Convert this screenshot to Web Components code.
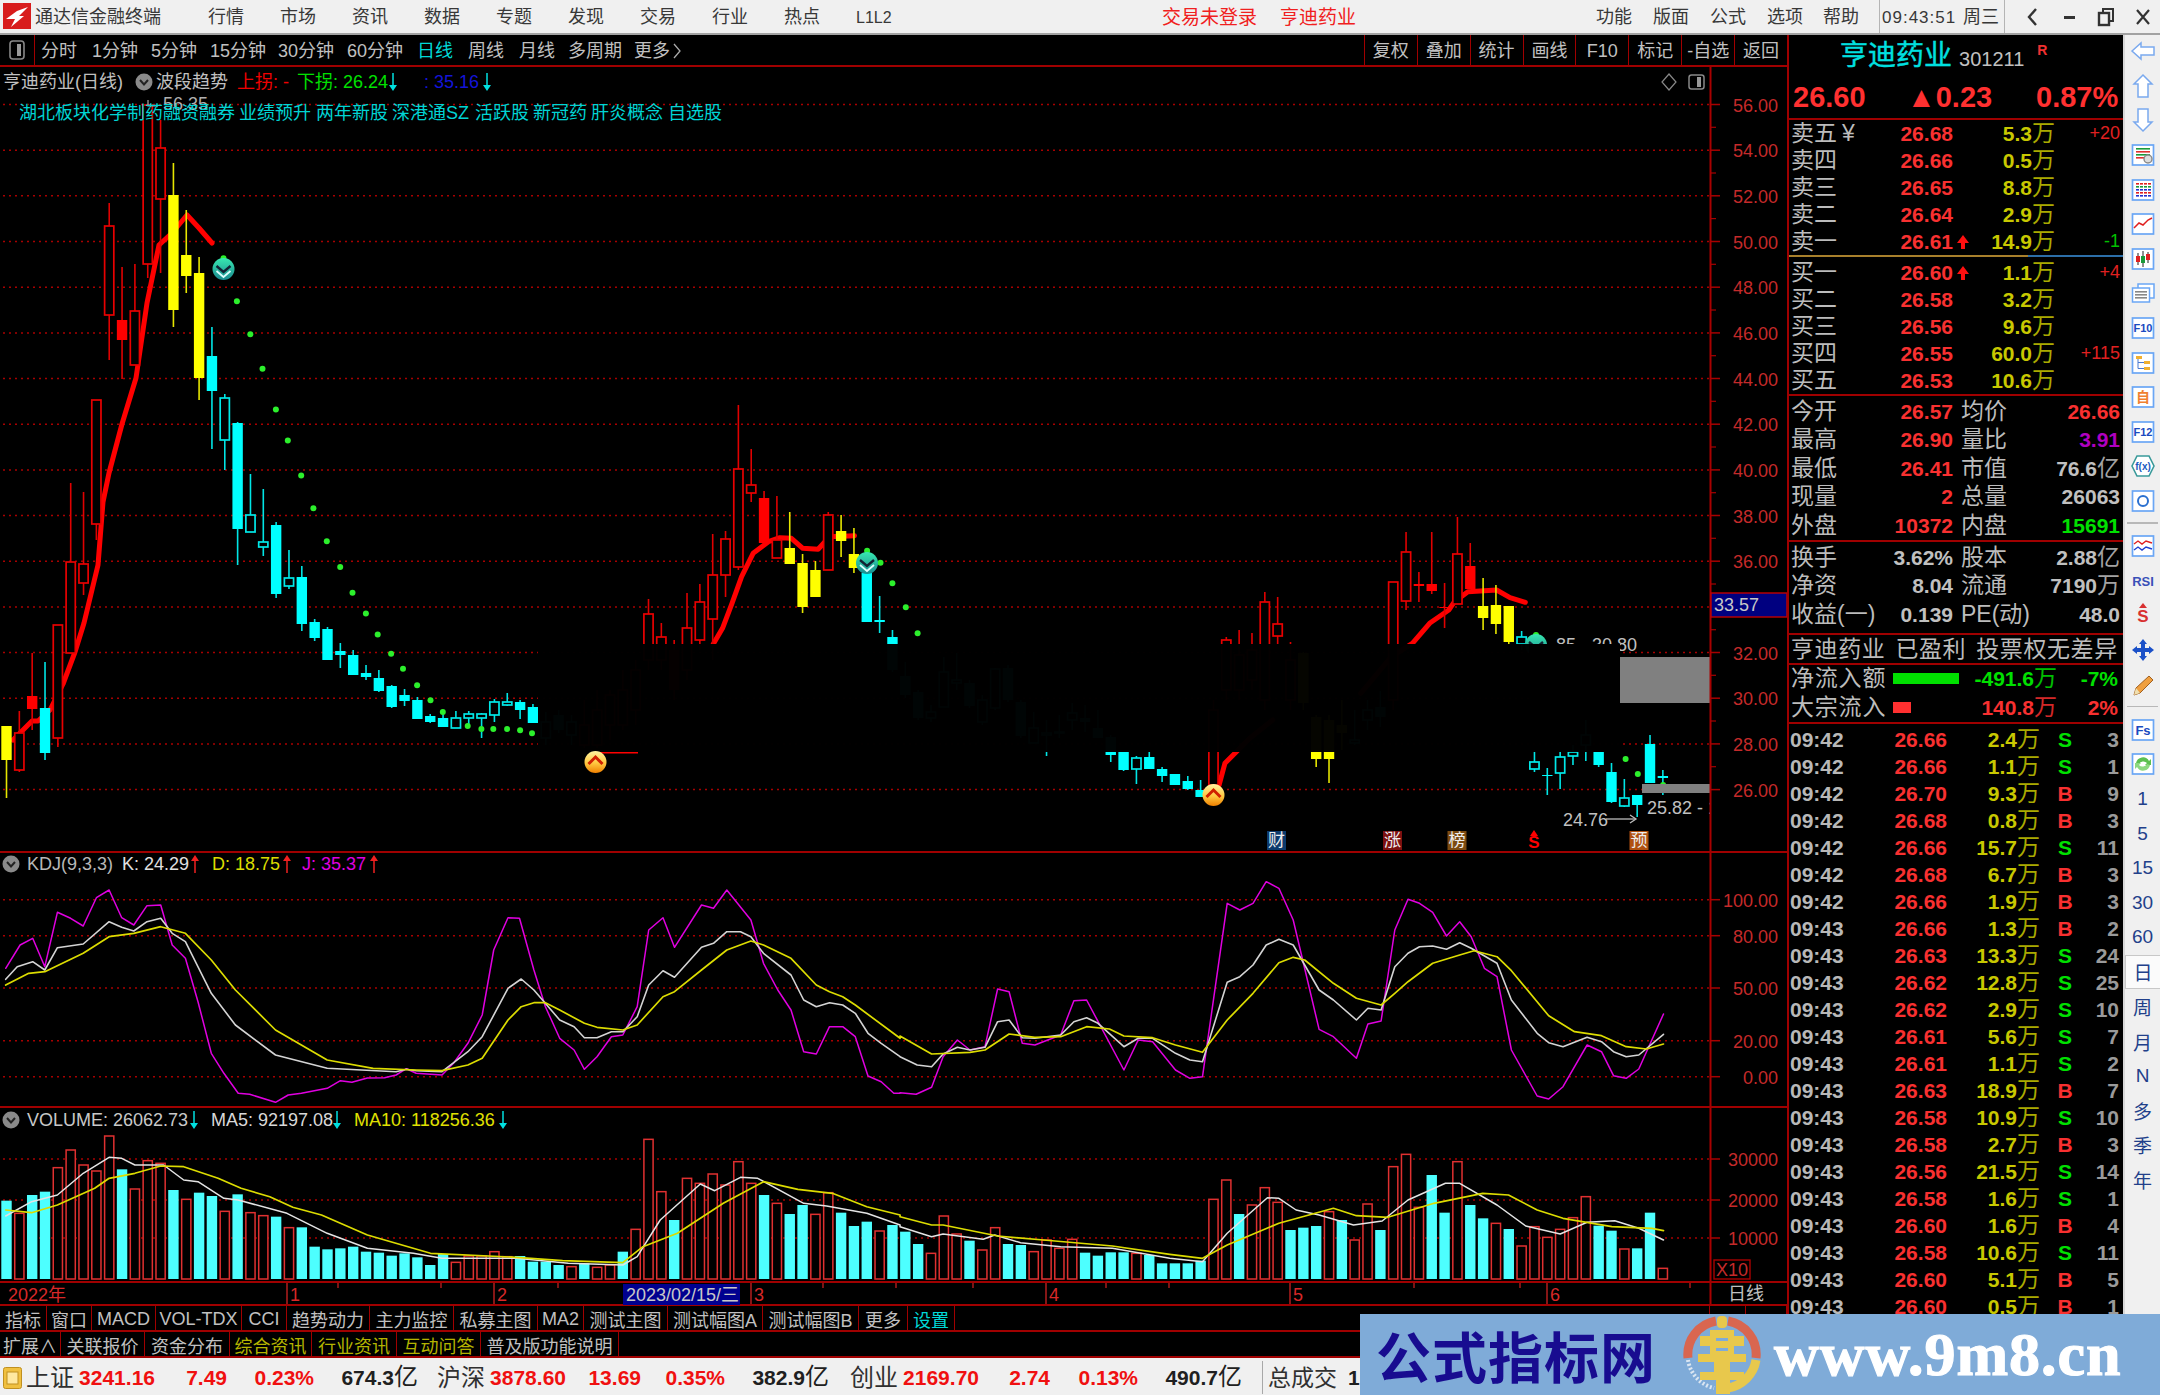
<!doctype html>
<html lang="zh"><head><meta charset="utf-8"><title>通达信金融终端</title>
<style>html,body{margin:0;padding:0;background:#000;overflow:hidden}</style></head>
<body>
<tdx-app>
  <tdx-titlebar></tdx-titlebar>
  <tdx-body>
    <tdx-left>
      <tdx-toolbar></tdx-toolbar>
      <kline-chart></kline-chart>
      <kdj-chart></kdj-chart>
      <vol-chart></vol-chart>
      <date-axis></date-axis>
      <tdx-tabbar>
        <tdx-tab w="47">指标</tdx-tab><tdx-tab w="45">窗口</tdx-tab><tdx-tab w="64">MACD</tdx-tab><tdx-tab w="86">VOL-TDX</tdx-tab><tdx-tab w="45">CCI</tdx-tab><tdx-tab w="83">趋势动力</tdx-tab><tdx-tab w="84">主力监控</tdx-tab><tdx-tab w="84">私募主图</tdx-tab><tdx-tab w="46">MA2</tdx-tab><tdx-tab w="84">测试主图</tdx-tab><tdx-tab w="95">测试幅图A</tdx-tab><tdx-tab w="96">测试幅图B</tdx-tab><tdx-tab w="49">更多</tdx-tab><tdx-tab w="47" color="#00d8d8">设置</tdx-tab>
        <tdx-tab w="46" style="margin-left:auto"></tdx-tab><tdx-tab w="36"></tdx-tab><tdx-tab w="41"></tdx-tab>
      </tdx-tabbar>
      <tdx-tabbar>
        <tdx-tab w="61">扩展∧</tdx-tab><tdx-tab w="84">关联报价</tdx-tab><tdx-tab w="85">资金分布</tdx-tab><tdx-tab w="82" color="#b4b400">综合资讯</tdx-tab><tdx-tab w="85" color="#b4b400">行业资讯</tdx-tab><tdx-tab w="84" color="#b4b400">互动问答</tdx-tab><tdx-tab w="138">普及版功能说明</tdx-tab>
      </tdx-tabbar>
    </tdx-left>
    <quote-panel></quote-panel>
    <tdx-sidebar></tdx-sidebar>
  </tdx-body>
  <tdx-statusbar></tdx-statusbar>
  <tdx-watermark></tdx-watermark>
</tdx-app>
<script>
const FONT='"Liberation Sans","Noto Sans CJK SC",sans-serif';
class Base extends HTMLElement{
  constructor(){super();this.attachShadow({mode:'open'}).innerHTML=this.render();}
  render(){return '<slot></slot>';}
}
const pairs=a=>{const r=[];for(let i=0;i<a.length;i+=2)r.push([a[i],a[i+1]]);return r;};
const polyline=(pts,c,w,extra='')=>`<polyline points="${pts.map(p=>p[0].toFixed(1)+','+p[1].toFixed(1)).join(' ')}" fill="none" stroke="${c}" stroke-width="${w}" stroke-linejoin="round" stroke-linecap="round" ${extra}/>`;
const cx=i=>6.5+12.84*i;
const grid=ys=>ys.map(y=>`<line x1="3" x2="1710" y1="${y}" y2="${y}" stroke="#a80000" stroke-width="1.5" stroke-dasharray="2 4"/>`).join('');
const txt=(x,y,s,c='#c0c0c0',o='')=>`<text x="${x}" y="${y}" dy=".36em" fill="${c}" ${o}>${s}</text>`;
const arrow=(x,y,c,up)=>up
 ?`<line x1="${x}" x2="${x}" y1="${y-6}" y2="${y+9}" stroke="${c}" stroke-width="1.5"/><polygon points="${x-4},${y-3} ${x+4},${y-3} ${x},${y-9}" fill="${c}"/>`
 :`<line x1="${x}" x2="${x}" y1="${y-9}" y2="${y+6}" stroke="${c}" stroke-width="1.5"/><polygon points="${x-4},${y+3} ${x+4},${y+3} ${x},${y+9}" fill="${c}"/>`;
const chevBtn=(x,y)=>`<circle cx="${x}" cy="${y}" r="8.5" fill="#8a8a8a"/><polyline points="${x-4},${y-2} ${x},${y+2.5} ${x+4},${y-2}" fill="none" stroke="#222" stroke-width="2"/>`;
const SVGCSS=`:host{display:block;box-sizing:border-box;border-bottom:2px solid #a00000;background:#000;overflow:hidden}svg{display:block;font:18px ${FONT}}`;
const axisLine=(y1,y2)=>`<line x1="1710.5" x2="1710.5" y1="${y1}" y2="${y2}" stroke="#a80000" stroke-width="2"/>`;
const axisLabel=(y,s)=>`<line x1="1710" x2="1720" y1="${y}" y2="${y}" stroke="#a80000" stroke-width="1.5"/><text x="1778" y="${y}" dy=".4em" text-anchor="end" fill="#c42a2a">${s}</text>`;

class TdxApp extends Base{render(){return `<style>:host{display:flex;flex-direction:column;position:relative;width:2160px;height:1395px;overflow:hidden;background:#000;font:18px ${FONT};color:#c0c0c0}</style><slot></slot>`;}}

class TdxMenu extends Base{render(){const w=this.getAttribute('w');const c=this.getAttribute('color')||'#383838';return `<style>:host{display:block;flex:none;width:${w}px;color:${c};line-height:35px;white-space:nowrap;font-size:${this.getAttribute('size')||18}px}</style><slot></slot>`;}}

class TdxTitlebar extends Base{render(){
  const m=(t,w,c,s)=>`<tdx-menu w="${w}"${c?` color="${c}"`:''}${s?` size="${s}"`:''}>${t}</tdx-menu>`;
  return `<style>:host{display:flex;flex:none;height:35px;box-sizing:border-box;border-bottom:2px solid #a2a2a2;background:#f0f0f0;overflow:hidden}
  .logo{flex:none;width:35px;padding:3px 0 0 3px;box-sizing:border-box}
  .div{flex:none;width:1px;background:#b4b4b4;height:33px}
  .ctl{flex:none;width:37px;height:33px;display:flex;align-items:center;justify-content:center}</style>
  <div class="logo"><svg width="28" height="26" viewBox="0 0 28 26"><rect width="28" height="26" fill="#d81c1c"/><path d="M3 16 L14 8 L25 4 L16 13 L21 13 L8 24 L12 16 Z" fill="#fff"/></svg></div>
  ${m('通达信金融终端',173)}
  ${['行情','市场','资讯','数据','专题','发现','交易','行业','热点'].map(t=>m(t,72)).join('')}
  ${m('L1L2',306,'#383838',16)}
  ${m('交易未登录',118,'#f02020',19)}
  ${m('亨迪药业',316,'#f02020',19)}
  ${m('功能',57)}${m('版面',57)}${m('公式',57)}${m('选项',56)}${m('帮助',56)}
  <div class="div"></div>
  <tdx-menu w="81" size="17" style="letter-spacing:1px;margin-left:2px">09:43:51</tdx-menu>${m('周三',41)}
  <div class="div"></div>
  <div class="ctl" style="margin-left:8px"><svg width="14" height="20"><polyline points="11,2 4,10 11,18" fill="none" stroke="#333" stroke-width="2.4"/></svg></div>
  <div class="ctl"><svg width="14" height="20"><rect x="2" y="9" width="11" height="3" fill="#333"/></svg></div>
  <div class="ctl"><svg width="18" height="20"><rect x="6" y="2" width="10" height="12" fill="none" stroke="#333" stroke-width="2"/><rect x="2" y="6" width="10" height="12" fill="#f0f0f0" stroke="#333" stroke-width="2.4"/></svg></div>
  <div class="ctl"><svg width="16" height="20"><path d="M2 3 L14 17 M14 3 L2 17" stroke="#333" stroke-width="2.2"/></svg></div>`;}}

class TdxBody extends Base{render(){return `<style>:host{display:grid;grid-template-columns:1787px 336px 37px;height:1323px;flex:none;background:#000}</style><slot></slot>`;}}
class TdxLeft extends Base{render(){return `<style>:host{display:flex;flex-direction:column;height:1323px}</style><slot></slot>`;}}

class TdxTab extends Base{render(){const w=this.getAttribute('w');const c=this.getAttribute('color')||'#c0c0c0';return `<style>:host{display:flex;flex:none;box-sizing:border-box;width:${w}px;align-items:center;justify-content:center;padding-top:2px;border-right:1.5px solid #a00000;color:${c};white-space:nowrap;font-size:18px}</style><slot></slot>`;}}
class TdxTabbar extends Base{render(){return `<style>:host{display:flex;flex:none;height:26px;box-sizing:border-box;border-bottom:2px solid #a00000;background:#000}</style><slot></slot>`;}}

class TdxToolbar extends Base{render(){
  const L=[['分时',51],['1分钟',59],['5分钟',59],['15分钟',68],['30分钟',69],['60分钟',70],['日线',51,'#00d8d8'],['周线',51],['月线',49],['多周期',66]];
  const R=['复权','叠加','统计','画线','F10','标记','-自选','返回'];
  return `<style>:host{display:flex;flex:none;height:32px;box-sizing:border-box;border-bottom:2px solid #a00000;background:#000;color:#c0c0c0;line-height:32px;font-size:18px}
  .box{flex:none;width:35px;box-sizing:border-box;border-right:1.5px solid #a00000;margin-right:6px;display:flex;align-items:center;justify-content:center}
  .i{flex:none;white-space:nowrap}
  .r{margin-left:auto;display:flex}
  .r span{display:block;width:52.9px;box-sizing:border-box;text-align:center;border-left:1.5px solid #a00000}</style>
  <div class="box"><svg width="16" height="20"><rect x="1" y="1" width="14" height="18" rx="3" fill="none" stroke="#888" stroke-width="1.6"/><rect x="8" y="4" width="4" height="12" fill="#999"/></svg></div>
  ${L.map(a=>`<div class="i" style="width:${a[1]}px;${a[2]?'color:'+a[2]:''}">${a[0]}</div>`).join('')}
  <div class="i">更多<svg width="10" height="18" style="vertical-align:-3px;margin-left:2px"><polyline points="2,2 8,9 2,16" fill="none" stroke="#aaa" stroke-width="1.3"/></svg></div>
  <div class="r">${R.map(t=>`<span>${t}</span>`).join('')}</div>`;}}

/* candle: high, bodyTop, bodyBottom, low, type (R hollow red, r filled red, Y yellow, C filled cyan, c hollow cyan) */
const CANDLES=[
[726,726,760,798,'Y'],[711,733,770,772,'R'],[653,696,709,730,'r'],[662,708,753,760,'C'],[625,625,738,747,'R'],[483,562,653,653,'R'],[492,564,583,595,'R'],[400,400,524,540,'R'],[203,226,315,360,'R'],[267,320,340,379,'r'],
[264,311,365,365,'R'],[105,105,264,278,'R'],[120,148,199,273,'R'],[163,195,310,327,'Y'],[210,255,276,293,'Y'],[257,273,378,400,'Y'],[327,356,391,449,'C'],[394,398,440,470,'c'],[422,423,529,565,'C'],[474,515,532,532,'c'],
[489,542,547,556,'c'],[522,525,594,598,'C'],[550,578,586,589,'c'],[566,577,624,631,'C'],[619,622,638,641,'C'],[627,629,660,660,'C'],[643,651,655,668,'C'],[650,655,675,675,'C'],[665,673,677,680,'C'],[670,678,691,692,'C'],
[685,686,707,708,'C'],[689,695,701,706,'C'],[697,700,719,719,'C'],[714,716,722,723,'C'],[710,718,727,727,'C'],[711,718,728,728,'c'],[711,714,718,725,'c'],[713,714,718,738,'c'],[699,702,715,722,'c'],[693,702,705,706,'c'],
[700,702,710,719,'C'],[704,707,723,723,'C'],[712,722,738,745,'c'],[710,715,730,733,'C'],[715,722,735,745,'c'],[700,725,745,748,'R'],[690,710,745,748,'R'],[690,695,725,740,'R'],[670,690,725,730,'R'],[660,670,710,725,'R'],
[599,614,660,670,'R'],[623,637,660,670,'R'],[640,650,690,700,'r'],[593,628,670,680,'R'],[584,602,640,650,'R'],[534,575,619,660,'R'],[531,539,575,597,'R'],[405,469,567,570,'R'],[449,485,493,502,'R'],[491,498,543,543,'r'],
[496,540,558,558,'R'],[512,548,564,564,'Y'],[554,563,607,613,'Y'],[561,570,597,597,'Y'],[512,515,570,570,'R'],[515,531,541,557,'Y'],[528,554,568,573,'Y'],[570,573,622,622,'C'],[596,620,622,633,'C'],[630,637,670,672,'C'],
[662,676,695,698,'C'],[690,692,718,720,'C'],[705,712,718,722,'c'],[657,672,707,707,'c'],[653,680,683,690,'c'],[680,683,706,708,'C'],[695,700,722,725,'c'],[668,669,708,710,'c'],[665,668,700,702,'C'],[700,702,736,738,'C'],
[712,728,743,743,'c'],[720,733,735,756,'c'],[715,732,733,738,'c'],[703,713,720,730,'c'],[705,718,722,732,'C'],[710,728,738,738,'C'],[735,737,755,762,'C'],[752,752,770,771,'C'],[756,758,769,784,'c'],[752,757,769,769,'C'],
[767,769,776,782,'C'],[774,774,785,785,'C'],[776,781,789,790,'C'],[780,790,797,797,'C'],[700,710,785,790,'R'],[637,640,690,700,'R'],[630,655,690,700,'R'],[633,650,680,690,'R'],[592,602,700,710,'R'],[597,624,636,644,'R'],
[642,660,700,710,'R'],[652,653,703,710,'Y'],[715,717,759,767,'Y'],[715,720,759,783,'Y'],[700,725,733,750,'Y'],[710,740,743,745,'c'],[700,710,720,730,'c'],[691,707,717,727,'C'],[582,582,700,710,'R'],[532,552,601,610,'R'],
[572,584,586,602,'r'],[532,584,591,594,'r'],[583,607,608,628,'r'],[517,554,604,604,'R'],[543,566,589,589,'r'],[578,606,618,630,'Y'],[585,605,624,634,'Y'],[606,606,642,644,'Y'],[631,637,644,650,'c'],[750,762,769,772,'c'],
[768,775,776,795,'C'],[752,757,773,789,'c'],[745,752,756,765,'c'],[720,735,745,761,'c'],[752,752,765,767,'C'],[763,772,802,803,'C'],[779,798,806,807,'c'],[795,795,805,817,'C'],[735,744,783,783,'C'],[770,776,778,795,'C']];
const candle=(d,i)=>{const [h,t,b,l,k]=d,x=cx(i),c={R:'#f00',r:'#f00',Y:'#ff0',C:'#0ff',c:'#0ff'}[k];
  const wick=(k==='Y')?'#e6e600':(k==='C'||k==='c')?'#00e6e6':'#e00000';
  let s='';
  if(k==='R'||k==='c'){
    if(t>h)s+=`<line x1="${x}" x2="${x}" y1="${h}" y2="${t}" stroke="${wick}" stroke-width="1.6"/>`;
    if(l>b)s+=`<line x1="${x}" x2="${x}" y1="${b}" y2="${l}" stroke="${wick}" stroke-width="1.6"/>`;
    s+=`<rect x="${x-4.6}" y="${t}" width="9.2" height="${b-t}" fill="#000" stroke="${k==='R'?'#e80000':'#00e8e8'}" stroke-width="1.7"/>`;
  }else{
    s+=`<line x1="${x}" x2="${x}" y1="${h}" y2="${l}" stroke="${wick}" stroke-width="1.6"/>`;
    s+=`<rect x="${x-5.2}" y="${t}" width="10.4" height="${b-t}" fill="${c}"/>`;
  }
  return s;};
class KlineChart extends Base{render(){
  const z7=a=>pairs(a).map(([x,y])=>[x/2.613,90+y/2.063]);
  const z8=a=>pairs(a).map(([x,y])=>[600+x/2.613,390+y/3]);
  const z9=a=>pairs(a).map(([x,y])=>[1200+x/2.613,500+y/3]);
  const gy=[];for(let p=0;p<=15;p++)gy.push(+(104.5+p*45.67).toFixed(1));
  const labels=[];let p=56;for(const y of gy){if(p!==34)labels.push(axisLabel(y,p.toFixed(2)));p-=2;}
  const minor=gy.slice(0,-1).map(y=>`<line x1="1710" x2="1716" y1="${y+22.8}" y2="${y+22.8}" stroke="#a80000" stroke-width="1.2"/>`).join('');
  const trends=[[13,740,23,730,32,721,38,721,50,710,63,684,75,652,84,623,98,565,103,502,109,473,122,424,136,378,147,303,159,245,172,233,187,215,199,228,212,243],
   z8([296,762,320,715,345,640,370,560,400,490,440,455,470,443,500,445,530,475,570,478,600,440,665,437]).flat(),
   z9([50,855,65,790,95,755,130,715,190,660]).flat(),
   z9([420,580,500,470,555,430,600,370,650,330,665,305,700,275,775,270,810,293,850,307]).flat()];
  const dots=[...z7([584,347,619,436,654,504,686,575,721,659,752,723,787,795,819,863,854,931,889,984,921,1037,956,1080,987,1123,1022,1163,1053,1194,1090,1228,1125,1259,1157,1283,1222,1312,1258,1318,1289,1318,1325,1318,1359,1321,1390,1327]),
    ...z8([698,482,733,518,764,580,799,652,830,730]),...z9([878,405,1112,777,1144,822,1210,855])];
  const teal=(x,y)=>`<g transform="translate(${x} ${y})"><circle r="11" fill="url(#tg)"/><polyline points="-7,-3 0,3 7,-3" fill="none" stroke="#123" stroke-width="2.4"/><polyline points="-7,2 0,8 7,2" fill="none" stroke="#dff" stroke-width="1.8"/></g>`;
  const gold=(x,y)=>`<g transform="translate(${x} ${y})"><circle r="11" fill="url(#gg)"/><polyline points="-7,2 0,-5 7,2" fill="none" stroke="#d02000" stroke-width="3"/></g>`;
  const tag=(x,s,c)=>`<rect x="${x-9.5}" y="831" width="19" height="19" fill="${c}"/><text x="${x}" y="840" dy=".36em" text-anchor="middle" fill="#eee" font-size="17">${s}</text>`;
  const words=[['湖北板块',19],['化学制药',91],['融资融券',163],['业绩预升',239],['两年新股',316],['深港通SZ',392],['活跃股',475],['新冠药',533],['肝炎概念',591],['自选股',668]];
  return `<style>${SVGCSS}:host{height:786px;overflow:visible}svg{overflow:visible}</style>
  <svg width="1787" height="784" viewBox="0 67 1787 784">
   <defs><linearGradient id="tg" x1="0" y1="0" x2="0" y2="1"><stop offset="0" stop-color="#38e8b0"/><stop offset="1" stop-color="#1a8a90"/></linearGradient>
   <linearGradient id="gg" x1="0" y1="0" x2="0" y2="1"><stop offset="0" stop-color="#fff3a0"/><stop offset=".55" stop-color="#ffc840"/><stop offset="1" stop-color="#f08000"/></linearGradient>
   <clipPath id="ax"><rect x="0" y="67" width="1710" height="785"/></clipPath></defs>
   ${grid(gy)}
   ${trends.map(t=>polyline(pairs(t),'#f00',5)).join('')}
   <line x1="597" x2="638" y1="752.5" y2="752.5" stroke="#f00" stroke-width="2"/>
   ${CANDLES.map(candle).join('')}
   ${dots.map(d=>`<ellipse cx="${d[0].toFixed(1)}" cy="${d[1].toFixed(1)}" rx="3" ry="3" fill="#2cf02c"/>`).join('')}
   ${teal(223.5,269)}${teal(867,563)}${teal(1536,645)}
   ${txt(1556,645,'85 -')}${txt(1592,645,'30.80')}
   <rect x="538" y="644" width="1082" height="108" fill="#000" fill-opacity=".98"/>
   <rect x="1529" y="644" width="91" height="60" fill="#000"/>
   <rect x="1620" y="657" width="90" height="46" fill="#808080"/>
   <rect x="1642" y="784" width="68" height="9" fill="#808080"/>
   ${gold(595.5,762)}${gold(1213.5,795)}
   ${tag(1276.5,'财','#0c3a6c')}${tag(1392.5,'涨','#7c1010')}${tag(1457,'榜','#7c4a10')}${tag(1639,'预','#b05010')}
   <polygon points="1534,830 1530,836 1538,836" fill="#f00"/><text x="1534" y="842" dy=".36em" text-anchor="middle" fill="#f00" font-size="17" font-weight="bold">S</text>
   <g clip-path="url(#ax)">${txt(1647,808,'25.82 - 17.90')}</g>
   ${txt(1563,820,'24.76')}<line x1="1606" x2="1635" y1="819" y2="819" stroke="#bbb" stroke-width="1.3"/><polyline points="1630,815 1636,819 1630,823" fill="none" stroke="#bbb" stroke-width="1.3"/>
   <polyline points="148,100 148,106 158,106" fill="none" stroke="#aaa" stroke-width="1.2"/>${txt(163,104,'56.35','#b0b0b0')}
   ${axisLine(67,851)}${labels.join('')}${minor}
   <rect x="1711" y="593" width="76" height="24" fill="#000080" stroke="#c00000" stroke-width="1.4"/>
   ${txt(1714,605,'33.57','#c8c8c8')}
   <polygon points="1669,74 1676,82 1669,90 1662,82" fill="none" stroke="#888" stroke-width="1.2"/>
   <rect x="1689" y="75" width="15" height="14" rx="2.5" fill="none" stroke="#888" stroke-width="1.5"/><rect x="1697" y="77" width="4" height="10" fill="#999"/>
   ${txt(3,82,'亨迪药业(日线)')}${chevBtn(144,82)}${txt(156,82,'波段趋势')}
   ${txt(237,82,'上拐: -','#f00000')}${txt(297,82,'下拐: 26.24','#00e000')}${arrow(393,82,'#00e0e0',false)}
   ${txt(424,82,': 35.16','#1414d8')}${arrow(487,82,'#00e0e0',false)}
   ${words.map(w=>txt(w[1],113,w[0],'#00d4d4')).join('')}
  </svg>`;}}

class KdjChart extends Base{render(){
  const a=l=>pairs(l).map(([x,y])=>[x/1.742,850+y/3]);
  const b=l=>pairs(l).map(([x,y])=>[900+x/1.742,850+y/3]);
  const J=[...a([10,355,35,285,57,265,78,350,100,187,123,205,145,228,168,143,190,120,212,203,233,225,256,167,280,165,300,285,323,325,345,455,368,610,390,670,415,730,435,733,480,757,502,735,525,730,570,715,593,692,613,697,640,684,670,683,690,675,708,656,725,670,770,675,790,640,815,580,840,495,860,300,885,203,905,205,930,360,950,470,975,565,1000,600,1018,658,1040,620,1065,560,1085,555,1110,470,1130,240,1155,203,1175,292,1222,165,1243,175,1266,120,1308,210,1330,340,1355,420,1378,480,1400,605,1422,612,1445,530,1468,530,1490,560,1512,678,1535,695,1557,730,1568,730]),
   ...b([0,728,28,733,55,712,75,620,100,570,122,600,148,590,170,417,190,425,213,580,235,585,280,555,303,452,325,450,390,660,415,570,440,575,480,660,505,685,527,680,570,160,592,180,615,160,638,95,660,115,685,210,730,538,755,560,795,625,815,522,838,513,862,240,885,148,905,160,928,187,952,258,975,215,995,260,1018,355,1040,380,1065,600,1110,738,1130,747,1155,710,1197,585,1222,605,1243,677,1265,685,1287,657,1330,492])];
  const K=[...a([10,388,30,350,57,335,78,360,100,293,145,282,190,215,212,232,233,243,256,215,280,205,300,250,323,275,368,430,410,525,480,615,570,655,690,665,708,658,725,662,770,665,815,605,840,560,885,415,908,387,930,420,975,510,1000,530,1018,563,1040,563,1065,545,1085,545,1110,500,1130,405,1155,362,1175,382,1222,292,1243,280,1266,245,1290,245,1308,260,1330,310,1378,375,1400,450,1422,470,1445,458,1468,465,1490,490,1512,550,1535,580,1568,620]),
   ...b([0,620,30,645,55,650,75,612,100,592,122,600,148,592,170,515,190,510,213,563,235,565,280,555,303,515,325,503,345,520,390,590,415,565,440,565,480,610,505,630,527,635,570,397,592,380,615,345,638,285,660,268,685,285,730,420,755,450,795,510,815,475,838,480,862,350,885,310,905,290,928,288,952,298,975,278,995,295,1040,340,1065,450,1110,550,1130,578,1155,590,1197,562,1222,575,1243,605,1265,620,1287,615,1330,553])];
  const D=[...a([10,405,50,370,78,365,145,310,190,260,233,250,280,230,323,250,368,330,410,420,480,540,570,630,650,655,725,660,770,662,815,645,840,625,885,510,908,470,930,458,950,458,975,480,1018,520,1040,532,1085,540,1110,525,1155,440,1175,425,1222,360,1266,300,1308,273,1330,285,1378,325,1422,405,1445,425,1468,440,1490,465,1568,565]),
   ...b([0,558,55,612,122,607,148,600,190,552,235,562,280,560,325,530,365,537,390,558,440,563,480,585,527,607,570,510,615,430,660,338,685,322,705,330,755,400,795,445,838,465,862,430,885,395,928,340,975,315,1000,302,1040,320,1065,362,1130,497,1175,545,1222,557,1265,590,1300,597,1330,582])];
  const gy=[899.7,935.7,988,1040.7,1076.7],ls=['100.00','80.00','50.00','20.00','0.00'];
  return `<style>${SVGCSS}:host{height:255px}</style>
  <svg width="1787" height="253" viewBox="0 853 1787 253">
   ${grid(gy)}${polyline(J,'#e000e0',1.5)}${polyline(K,'#d4d4d4',1.6)}${polyline(D,'#dcdc00',1.7)}
   ${chevBtn(11,864)}${txt(27,864,'KDJ(9,3,3)','#b8b8b8')}${txt(122,864,'K: 24.29','#e0e0e0')}${arrow(195,864,'#f02020',true)}
   ${txt(212,864,'D: 18.75','#dcdc00')}${arrow(287,864,'#f02020',true)}${txt(302,864,'J: 35.37','#e000e0')}${arrow(374,864,'#f02020',true)}
   ${axisLine(853,1106)}${gy.map((y,i)=>axisLabel(y,ls[i])).join('')}
  </svg>`;}}

class VolChart extends Base{render(){
  const T=[1052,'C',1090,'R',1035,'C',1025,'C',953,'R',900,'R',945,'R',963,'R',858,'R',958,'C',1017,'R',932,'R',940,'R',1020,'C',1048,'R',1028,'C',1038,'C',1084,'R',1033,'C',1088,'R',1097,'R',1100,'C',1133,'R',1132,'C',1190,'C',1198,'C',1195,'C',1190,'C',1205,'C',1208,'C',1217,'C',1210,'C',1222,'C',1245,'C',1212,'C',1237,'R',1218,'R',1218,'R',1205,'R',1220,'R',1218,'C',1235,'C',1235,'C',1245,'C',1250,'R',1240,'C',1252,'R',1245,'R',1205,'C',1138,'R',868,'R',1025,'R',1110,'C',985,'R',1000,'R',972,'R',1005,'R',935,'R',1000,'R',1035,'C',1060,'R',1092,'C',1065,'C',1093,'R',1028,'R',1088,'C',1128,'C',1115,'C',1143,'R',1125,'C',
  1145,'C',1182,'C',1210,'R',1098,'R',1152,'R',1172,'C',1200,'R',1133,'R',1182,'C',1185,'C',1205,'R',1170,'R',1195,'R',1168,'R',1208,'C',1217,'C',1207,'C',1207,'C',1210,'R',1215,'C',1240,'C',1240,'C',1240,'C',1232,'C',1048,'R',990,'R',1092,'C',1065,'R',1013,'R',1057,'R',1140,'C',1133,'C',1128,'C',1085,'R',1110,'C',1170,'R',1062,'R',1140,'C',950,'R',913,'R',1072,'R',975,'C',1088,'C',935,'R',1065,'C',1105,'C',1120,'R',1137,'C',1188,'R',1130,'R',1162,'R',1138,'R',1103,'R',1040,'R',1127,'C',1142,'C',1197,'R',1195,'C',1088,'C',1255,'R'];
  const base=1279;let bars='';
  for(let i=0;i<T.length;i+=2){const n=i/2,x=cx(n),y=850+T[i]/3;
    bars+=T[i+1]==='C'?`<rect x="${x-5.2}" y="${y}" width="10.4" height="${base-y}" fill="#4dffff"/>`
     :`<rect x="${x-4.6}" y="${y}" width="9.2" height="${base-y}" fill="#000" stroke="#e03030" stroke-width="1.5"/>`;}
  const a=l=>pairs(l).map(([x,y])=>[x/1.742,850+y/3]);
  const b=l=>pairs(l).map(([x,y])=>[900+x/1.742,850+y/3]);
  const M5=[...a([10,1098,55,1055,100,1035,145,970,190,922,212,925,235,945,285,945,320,990,345,995,390,1045,415,1050,500,1090,570,1150,640,1195,720,1210,770,1225,900,1225,990,1240,1085,1245,1110,1220,1150,1110,1220,1002,1245,1022,1290,982,1320,985,1400,1060,1440,1068,1510,1090,1568,1125]),
   ...b([0,1130,55,1160,75,1152,145,1168,165,1155,210,1178,280,1190,370,1195,470,1225,527,1235,570,1150,640,1043,660,1045,690,1080,730,1095,790,1125,840,1113,885,1050,950,1000,975,1000,1040,1065,1090,1128,1150,1152,1197,1117,1245,1112,1287,1135,1330,1170])];
  const M10=[...a([10,1080,55,1088,100,1065,165,1015,190,985,235,970,280,948,320,950,380,985,420,1015,470,1040,510,1072,560,1095,640,1155,750,1210,900,1222,980,1232,1085,1238,1120,1190,1180,1150,1260,1060,1330,995,1390,1018,1450,1030,1510,1070,1568,1095]),
   ...b([0,1100,55,1125,75,1125,170,1158,250,1170,370,1188,470,1213,527,1225,570,1185,660,1120,755,1075,795,1097,850,1102,930,1060,1015,1030,1060,1035,1110,1080,1155,1105,1240,1130,1310,1135,1330,1142])];
  const gy=[1159,1200,1238],ls=['30000','20000','10000'];
  return `<style>${SVGCSS}:host{height:175px}</style>
  <svg width="1787" height="173" viewBox="0 1108 1787 173">
   ${grid(gy)}${bars}${polyline(M5,'#e4e4e4',1.5)}${polyline(M10,'#dcdc00',1.7)}
   ${chevBtn(11,1120)}${txt(27,1120,'VOLUME: 26062.73','#c8c8c8')}${arrow(194,1120,'#00e0e0',false)}
   ${txt(211,1120,'MA5: 92197.08','#d8d8d8')}${arrow(337,1120,'#00e0e0',false)}
   ${txt(354,1120,'MA10: 118256.36','#e0e000')}${arrow(503,1120,'#00e0e0',false)}
   ${axisLine(1108,1281)}${gy.map((y,i)=>axisLabel(y,ls[i])).join('')}
   <rect x="1714" y="1260" width="36" height="19" fill="none" stroke="#a80000" stroke-width="1.4"/>${txt(1716,1270,'X10','#c42a2a')}
  </svg>`;}}

class DateAxis extends Base{render(){
  const seps=[[287,'1'],[494,'2'],[751,'3'],[1046,'4'],[1290,'5'],[1547,'6']];
  const ticks=[338,441,558,823,896,973,1106,1169,1414,1520,1690];
  return `<style>${SVGCSS}:host{height:23px;overflow:visible}svg{overflow:visible}</style>
  <svg width="1787" height="21" viewBox="0 1283 1787 21">
   ${ticks.map(x=>`<line x1="${x}" x2="${x}" y1="1283" y2="1288" stroke="#c02020" stroke-width="1.3"/>`).join('')}
   ${txt(8,1295,'2022年','#d82828')}
   ${seps.map(s=>`<line x1="${s[0]}" x2="${s[0]}" y1="1283" y2="1304" stroke="#c02020" stroke-width="1.4"/>`+txt(s[0]+3,1295,s[1],'#d82828')).join('')}
   <rect x="623" y="1284" width="117" height="21" fill="#000090"/>${txt(626,1295,'2023/02/15/三','#c8c8c8')}
   ${axisLine(1283,1304)}${txt(1728,1294,'日线')}
  </svg>`;}}

class QuotePanel extends Base{render(){
  const v=s=>{const m=s.match(/^(.*?)([万亿])$/);return m?`${m[1]}<i>${m[2]}</i>`:s;};
  const ob=(l,p,up,q,d,dc)=>`<div class="ob"><span class="l">${l}</span><b class="r re">${p}</b><span class="up">${up?'<svg width="14" height="16"><polygon points="7,1 13,9 9,9 9,15 5,15 5,9 1,9" fill="#ff1010"/></svg>':''}</span><b class="r ye">${v(q)}</b><span class="r d" style="color:${dc||'#e02020'}">${d||''}</span></div>`;
  const st=(a,b,bc,c,d,dc)=>`<div class="st"><span class="l">${a}</span><b class="r ${bc}">${b}</b><span class="l l2">${c}</span><b class="r ${dc}">${v(d)}</b></div>`;
  const T=[['09:42','26.66','2.4万','S','3'],['09:42','26.66','1.1万','S','1'],['09:42','26.70','9.3万','B','9'],['09:42','26.68','0.8万','B','3'],['09:42','26.66','15.7万','S','11'],['09:42','26.68','6.7万','B','3'],['09:42','26.66','1.9万','B','3'],['09:43','26.66','1.3万','B','2'],['09:43','26.63','13.3万','S','24'],['09:43','26.62','12.8万','S','25'],['09:43','26.62','2.9万','S','10'],['09:43','26.61','5.6万','S','7'],['09:43','26.61','1.1万','S','2'],['09:43','26.63','18.9万','B','7'],['09:43','26.58','10.9万','S','10'],['09:43','26.58','2.7万','B','3'],['09:43','26.56','21.5万','S','14'],['09:43','26.58','1.6万','S','1'],['09:43','26.60','1.6万','B','4'],['09:43','26.58','10.6万','S','11'],['09:43','26.60','5.1万','B','5'],['09:43','26.60','0.5万','B','1']];
  return `<style>
  :host{display:block;box-sizing:border-box;border-left:2px solid #a00000;background:#000;color:#c0c0c0;font:21px ${FONT};height:1323px;overflow:hidden;line-height:27px}
  b{font-weight:bold;white-space:nowrap} i{font-style:normal;font-weight:normal;font-size:23px;color:inherit;opacity:.85}
  .l{font-size:23px;white-space:nowrap;color:#bcbcbc}
  .l u{text-decoration:none;margin-left:5px}
  .r{text-align:right}.re{color:#f83030}.ye{color:#c8c800}.gr{color:#00e000}.gy{color:#c0c0c0}.ma{color:#b000c0}
  .h1{height:42px;padding-left:51px;display:flex;align-items:center;gap:7px}
  .nm{font-size:28px;color:#00e0e0;-webkit-text-stroke:.4px #00e0e0;line-height:40px}
  .cd{font-size:20px;color:#c0c0c0;margin-top:6px}.rr{font-size:14px;color:#f03030;font-weight:bold;margin:-12px 0 0 6px}
  .h2{height:43px;box-sizing:border-box;border-bottom:2px solid #a00000;display:grid;grid-template-columns:114px 129px auto;padding-left:4px;align-items:center;font:bold 29px ${FONT};color:#ff3030;line-height:41px}
  .ob{display:grid;grid-template-columns:80px 82px 20px 82px 65px;height:27px;padding-left:2px;align-items:center}
  .up{display:flex;justify-content:center;height:16px}
  .d{font-size:18px}
  .gold{height:2px;background:linear-gradient(to right,#a8802c 71.5%,#2c6ea8 0)}
  .sec{box-sizing:border-box;border-bottom:2px solid #a00000}
  .st{display:grid;grid-template-columns:80px 82px 8px 60px 99px;height:28.5px;padding-left:2px;align-items:center}
  .st .l2{grid-column:4}
  .st .r:last-child{grid-column:5}
  .tx{height:28px;line-height:28px;padding-left:2px;font-size:23px;white-space:nowrap;word-spacing:3px;letter-spacing:.6px;color:#bcbcbc}
  .fl{display:grid;grid-template-columns:102px 72px 92px 61px;height:29px;padding-left:2px;align-items:center}
  .bar{height:11px}
  .ts{display:grid;grid-template-columns:91px 66px 93px 50px 29px;height:27px;padding-left:1px;align-items:center}
  .ts .t{color:#b8b8b8}.ts .c{color:#9a9a9a;text-align:right}
  .bs{text-align:center}
  </style>
  <div class="h1"><span class="nm">亨迪药业</span><span class="cd">301211</span><span class="rr">R</span></div>
  <div class="h2"><span>26.60</span><span>▲0.23</span><span>0.87%</span></div>
  <div>${ob('卖五<u>¥</u>','26.68',0,'5.3万','+20')}${ob('卖四','26.66',0,'0.5万')}${ob('卖三','26.65',0,'8.8万')}${ob('卖二','26.64',0,'2.9万')}${ob('卖一','26.61',1,'14.9万','-1','#00c000')}</div>
  <div class="gold"></div>
  <div class="sec" style="padding-top:2px;height:139px">${ob('买一','26.60',1,'1.1万','+4')}${ob('买二','26.58',0,'3.2万')}${ob('买三','26.56',0,'9.6万')}${ob('买四','26.55',0,'60.0万','+115')}${ob('买五','26.53',0,'10.6万')}</div>
  <div class="sec" style="height:146px;padding-top:1px">${st('今开','26.57','re','均价','26.66','re')}${st('最高','26.90','re','量比','3.91','ma')}${st('最低','26.41','re','市值','76.6亿','gy')}${st('现量','2','re','总量','26063','gy')}${st('外盘','10372','re','内盘','15691','gr')}</div>
  <div class="sec" style="height:93px;padding-top:1px">${st('换手','3.62%','gy','股本','2.88亿','gy')}${st('净资','8.04','gy','流通','7190万','gy')}${st('收益(一)','0.139','gy','PE(动)','48.0','gy')}</div>
  <div class="sec" style="height:30px"><div class="tx">亨迪药业 已盈利 投票权无差异</div></div>
  <div class="sec" style="height:60px;margin-top:-1px">
    <div class="fl"><span class="l" style="letter-spacing:.8px">净流入额</span><div class="bar" style="background:#00e000;width:66px"></div><b class="r gr">${v('-491.6万')}</b><b class="r gr">-7%</b></div>
    <div class="fl"><span class="l" style="letter-spacing:.8px">大宗流入</span><div class="bar" style="background:#ff3030;width:18px"></div><b class="r re">${v('140.8万')}</b><b class="r re">2%</b></div>
  </div>
  <div style="padding-top:2px">${T.map(t=>`<div class="ts"><b class="t">${t[0]}</b><b class="r re">${t[1]}</b><b class="r ye">${v(t[2])}</b><b class="bs ${t[3]==='S'?'gr':'re'}">${t[3]}</b><b class="c">${t[4]}</b></div>`).join('')}</div>`;}}

class TdxSidebar extends Base{render(){
  const B='#6aa6f5';
  const box=c=>`<rect x="1.5" y="2" width="21" height="20" fill="#fff" stroke="${B}" stroke-width="1.7"/>${c}`;
  const rows=(y,cs,x=5,w=14)=>cs.map((c,i)=>`<rect x="${x}" y="${y+i*3}" width="${w}" height="1.6" fill="${c}"/>`).join('');
  const T=(s,c='#1a4ac0',fs=12)=>`<text x="12" y="12" dy=".36em" text-anchor="middle" font-size="${fs}" font-weight="bold" fill="${c}" font-family='"Liberation Sans","Noto Sans CJK SC",sans-serif'>${s}</text>`;
  const ic=[
   `<polygon points="1,12 10,4 10,8 23,8 23,16 10,16 10,20" fill="#fff" stroke="#7aa9ee" stroke-width="1.5"/>`,
   `<polygon points="12,1 21,10 17,10 17,23 7,23 7,10 3,10" fill="#fff" stroke="#7aa9ee" stroke-width="1.5"/>`,
   `<polygon points="12,23 21,14 17,14 17,1 7,1 7,14 3,14" fill="#fff" stroke="#7aa9ee" stroke-width="1.5"/>`,
   box(rows(5,['#1a9a3a','#e03030','#1a9a3a','#e03030'])+`<circle cx="17" cy="16" r="4" fill="#ddd" stroke="#888" stroke-width="1.4"/>`),
   box([5,9,13,17].map((x,k)=>rows(5,['#e02020','#1a9a3a','#2030d0','#e02020','#2030d0'],x,3)).join('')),
   box(`<polyline points="3,16 8,11 12,13 17,8 21,6" fill="none" stroke="#e02020" stroke-width="1.5"/>`),
   box(`<path d="M7 6V18M12 4V20M17 5V16" stroke="#222" stroke-width="1"/><rect x="5" y="9" width="4" height="6" fill="#e02020"/><rect x="10" y="9" width="4" height="7" fill="#1a9a3a"/><rect x="15" y="7" width="4" height="6" fill="#e02020"/>`),
   `<rect x="7" y="3" width="16" height="14" fill="#fff" stroke="${B}" stroke-width="1.5"/><rect x="1.5" y="7" width="17" height="14" fill="#fff" stroke="${B}" stroke-width="1.5"/>`+rows(10,['#888','#888','#888'],4,12),
   box(T('F10','#1a4ac0',11)),
   box(`<rect x="5" y="5" width="6" height="3" fill="#f0b030"/><rect x="13" y="10" width="6" height="3" fill="#f0b030"/><rect x="13" y="16" width="6" height="3" fill="#f0b030"/><path d="M7 8V17.5H13M7 11.5H13" fill="none" stroke="#4a7ad0" stroke-width="1"/>`),
   box(T('自','#f08030',14)),
   box(T('F12','#1a4ac0',11)),
   `<polygon points="6,2 18,2 23,12 18,22 6,22 1,12" fill="#fff" stroke="#3a9a9a" stroke-width="1.6"/>`+T('f(x)','#1a5ac0',10),
   box(`<circle cx="12" cy="12" r="5" fill="none" stroke="#2a70d0" stroke-width="2"/>`),
   'sep',
   box(`<polyline points="3,10 7,7 11,10 15,7 21,9" fill="none" stroke="#e02020" stroke-width="1.4"/><polyline points="3,16 7,13 11,16 15,13 21,15" fill="none" stroke="#2040d0" stroke-width="1.4"/>`),
   T('RSI','#3a50b8',13),
   `<polygon points="12,0 8,5 16,5" fill="#d83030"/><text x="12" y="13" dy=".36em" text-anchor="middle" font-size="17" font-weight="bold" fill="#d83030" font-family='"Liberation Sans",sans-serif'>S</text>`,
   `<path d="M12 1L16 6H14V10H18V8L23 12L18 16V14H14V18H16L12 23L8 18H10V14H6V16L1 12L6 8V10H10V6H8Z" fill="#1a50c8"/>`,
   `<polygon points="3,22 5,15 18,3 22,7 9,20" fill="#f0a040" stroke="#a06020" stroke-width="1"/><polygon points="3,22 5,15 9,20" fill="#f0e0b0"/>`,
   'sep',
   box(T('Fs','#1a4ac0',13)),
   box(`<path d="M5 11A7 7 0 0 1 18 9L20 7V13H14L16 11A5 5 0 0 0 8 12Z" fill="#5cc050"/><path d="M19 13A7 7 0 0 1 6 15L4 17V11H10L8 13A5 5 0 0 0 16 12Z" fill="#8cd880"/>`)
  ];
  const tx=['1','5','15','30','60','日','周','月','N','多','季','年'];
  return `<style>:host{display:block;background:#f0f0f0;border-left:2px solid #d8d8d8;box-sizing:border-box;height:1323px;overflow:hidden}
  .wrap{margin-top:-1px}
  .i{height:34.6px;display:flex;align-items:center;justify-content:center}
  .s{height:1.6px;background:#b8b8b8;margin:4px 2px 5px}
  .t{color:#22408a;font:19px ${FONT}}
  .sel{background:#fbfbfb;border:1px solid #c8c8c8;border-right:0;box-sizing:border-box}
  svg{display:block;overflow:visible}</style>
  <div class="wrap">${ic.map(s=>s==='sep'?'<div class="s"></div>':`<div class="i"><svg width="24" height="24" viewBox="0 0 24 24">${s}</svg></div>`).join('')}
  ${tx.map(s=>`<div class="i t${s==='日'?' sel':''}">${s}</div>`).join('')}</div>`;}}

class TdxStatusbar extends Base{render(){
  const c=(w,h,cl='n')=>`<span class="${cl}" style="width:${w}px">${h}</span>`;
  const y=s=>s.replace('亿','<i>亿</i>');
  const seg=(ln,lw,p,d,pc,v,ws)=>c(lw,ln,'lb')+c(77,p,'n re')+c(ws[0],d,'n re')+c(ws[1],pc,'n re')+c(ws[2],y(v),'n bk');
  return `<style>:host{display:flex;flex:none;height:37px;box-sizing:border-box;padding:2px 0 0 3px;align-items:center;background:#f0f0f0;font:bold 21px ${FONT};white-space:nowrap;overflow:hidden}
  span{display:block;flex:none;line-height:30px}
  .n{text-align:right}.re{color:#f01010}.bk{color:#202020}
  i{font-style:normal;font-weight:normal;font-size:24px}
  .lb{font-weight:normal;font-size:24px;color:#303030;text-align:right;padding-right:4px;box-sizing:border-box}
  .sep{width:1px;height:33px;background:#a8a8a8;margin:0 5px 0 20px}</style>
  <svg width="19" height="22" viewBox="0 0 19 22" style="flex:none"><rect x=".5" y=".5" width="18" height="21" rx="2" fill="#f0c040" stroke="#c09020"/><rect x="4" y="5" width="11" height="12" fill="#ffe8a0" stroke="#c09020"/></svg>
  ${seg('上证',56,'3241.16','7.49','0.23%','674.3亿',[72,87,104])}
  ${seg('沪深',71,'3878.60','13.69','0.35%','382.9亿',[75,84,104])}
  ${seg('创业',73,'2169.70','2.74','0.13%','490.7亿',[71,88,104])}
  <div class="sep"></div><span class="lb" style="text-align:left;width:80px;font-size:23px">总成交</span><span class="bk">1</span>`;}}

class TdxWatermark extends Base{render(){return `<style>:host{position:absolute;left:1360px;top:1314px;width:800px;height:81px;background:#7fabd8;display:flex;align-items:center}
  .cn{flex:none;margin-left:16px;width:284px;font:bold 55px "Noto Sans CJK SC",sans-serif;color:#180c90;line-height:81px;letter-spacing:1px;white-space:nowrap}
  .en{flex:none;margin-left:12px;font:bold 62px "Liberation Serif",serif;color:#fff;-webkit-text-stroke:1.2px #fff;letter-spacing:1px;line-height:81px;white-space:nowrap}
  svg{flex:none;margin-left:22px}</style>
  <div class="cn">公式指标网</div>
  <svg width="80" height="78" viewBox="0 0 80 78">
    <path d="M6 42A34 34 0 0 1 34 5" fill="none" stroke="#d96650" stroke-width="9"/>
    <path d="M46 5A34 34 0 0 1 74 42" fill="none" stroke="#d96650" stroke-width="9"/>
    <path d="M74 44A34 34 0 0 1 46 72" fill="none" stroke="#e8c84c" stroke-width="9"/>
    <path d="M6 44A34 34 0 0 0 32 72" fill="none" stroke="#dbe6f2" stroke-width="4" stroke-dasharray="2 2"/>
    <rect x="35" y="0" width="10" height="12" rx="4" fill="#e8c84c"/>
    <path d="M28 14H52V20H62V30H52V38H64V46H48V56H62V64H48V78H34V64H18V56H32V46H16V38H28V30H18V20H28Z" fill="#e8c84c"/>
    <rect x="34" y="22" width="12" height="3" fill="#7fabd8"/><rect x="34" y="32" width="12" height="3" fill="#7fabd8"/>
  </svg>
  <div class="en">www.9m8.cn</div>`;}}

const defs={'tdx-app':TdxApp,'tdx-menu':TdxMenu,'tdx-titlebar':TdxTitlebar,'tdx-body':TdxBody,'tdx-left':TdxLeft,'tdx-tab':TdxTab,'tdx-tabbar':TdxTabbar,'tdx-toolbar':TdxToolbar,'kline-chart':KlineChart,'kdj-chart':KdjChart,'vol-chart':VolChart,'date-axis':DateAxis,'quote-panel':QuotePanel,'tdx-sidebar':TdxSidebar,'tdx-statusbar':TdxStatusbar,'tdx-watermark':TdxWatermark};
for(const k in defs)customElements.define(k,defs[k]);
</script>
</body></html>
